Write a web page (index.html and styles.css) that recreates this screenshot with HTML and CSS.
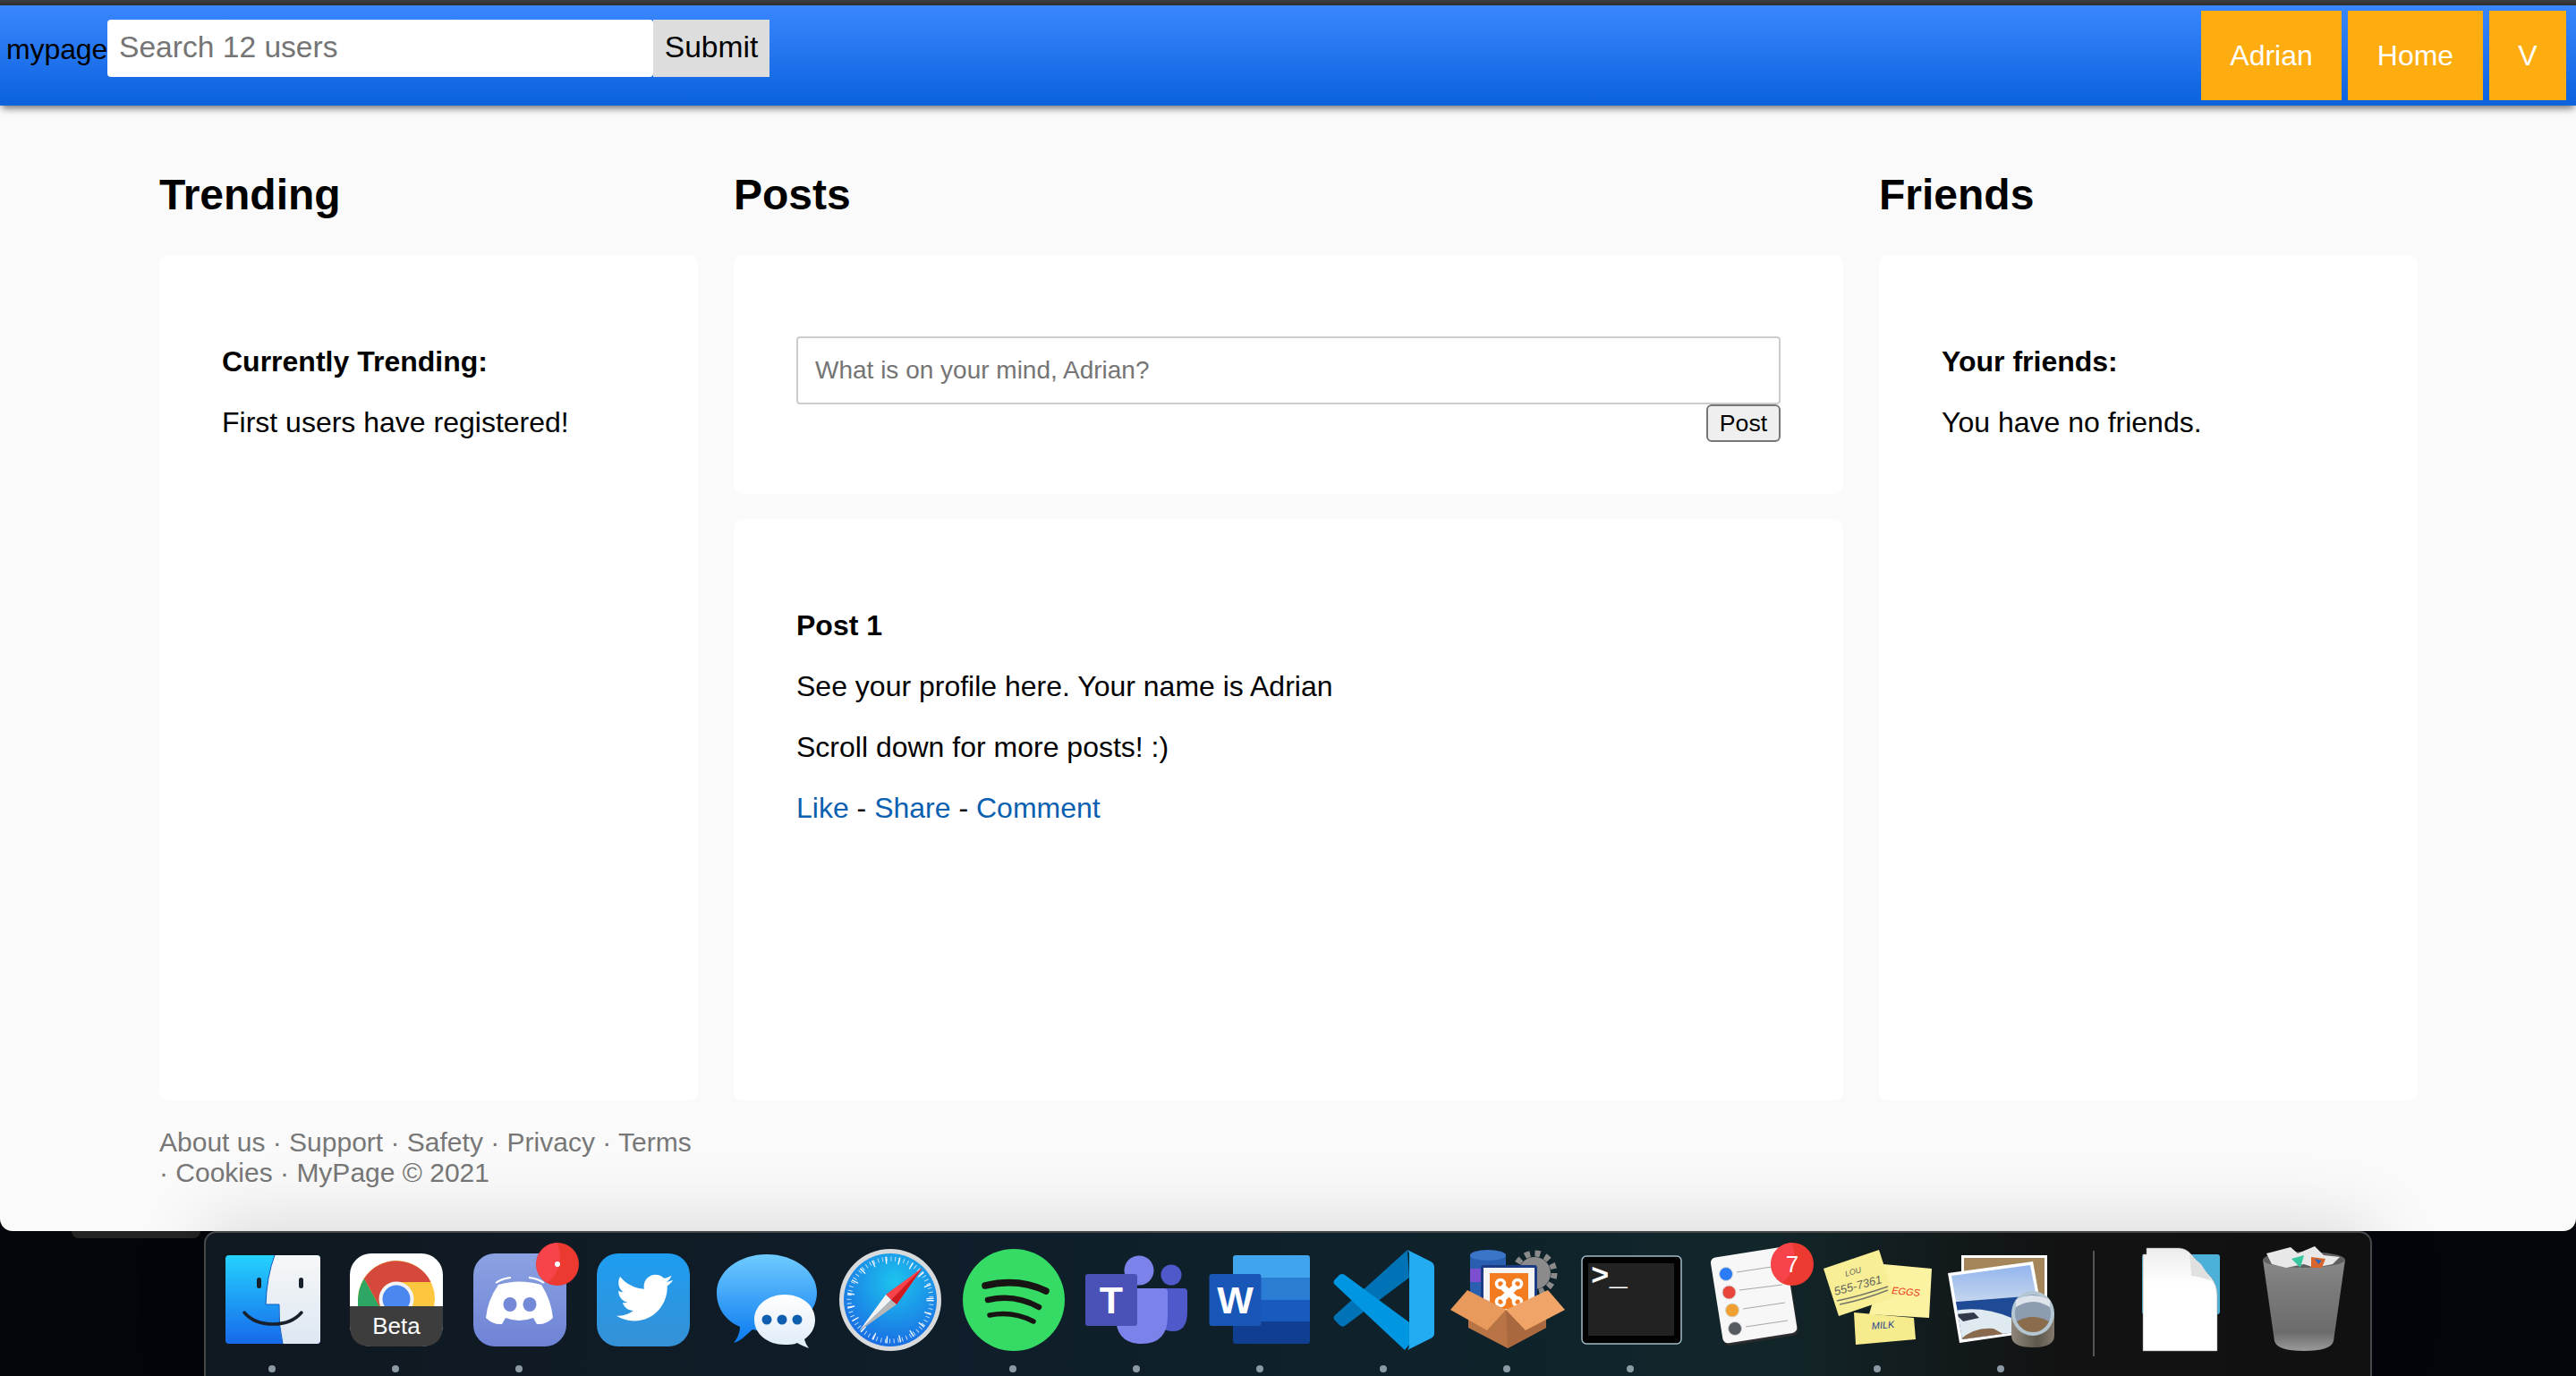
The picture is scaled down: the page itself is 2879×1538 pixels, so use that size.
FILE: index.html
```html
<!DOCTYPE html>
<html lang="en">
<head>
  <meta charset="UTF-8">
  <title>MyPage</title>
  <link rel="stylesheet" href="styles.css">
</head>
<body>
  <div class="window">
    <div class="titlebar"></div>
    <nav class="navbar">
      <form class="search">
        <span class="brand">mypage</span>
        <input class="search-input" type="text" placeholder="Search 12 users">
        <button class="search-button" type="button">Submit</button>
      </form>
      <div class="nav-links">
        <a class="nav-link" href="#">Adrian</a>
        <a class="nav-link" href="#">Home</a>
        <a class="nav-link" href="#">V</a>
      </div>
    </nav>

    <main class="columns">
      <section>
        <h2>Trending</h2>
        <div class="card card-full">
          <p><b>Currently Trending:</b></p>
          <p>First users have registered!</p>
        </div>
        <footer class="site-footer">
          <a href="#">About us</a> · <a href="#">Support</a> · <a href="#">Safety</a> · <a href="#">Privacy</a> · <a href="#">Terms</a> · <a href="#">Cookies</a> · MyPage © 2021
        </footer>
      </section>

      <section>
        <h2>Posts</h2>
        <form class="card post-form">
          <input class="post-input" type="text" placeholder="What is on your mind, Adrian?">
          <button class="post-button" type="button">Post</button>
        </form>
        <div class="card post">
          <p><b>Post 1</b></p>
          <p>See your profile here. Your name is Adrian</p>
          <p>Scroll down for more posts! :)</p>
          <p><a href="#">Like</a> - <a href="#">Share</a> - <a href="#">Comment</a></p>
        </div>
      </section>

      <section>
        <h2>Friends</h2>
        <div class="card card-full">
          <p><b>Your friends:</b></p>
          <p>You have no friends.</p>
        </div>
      </section>
    </main>
  </div>

  <div class="desktop">
    <div class="shelf"></div>
    <div class="dock">

      <!-- finder -->
      <div class="dock-item">
        <svg class="dock-icon" viewBox="0 0 120 120">
          <defs>
            <linearGradient id="finderBlue" x1="0" y1="0" x2="0" y2="1"><stop offset="0" stop-color="#24d2ff"/><stop offset="1" stop-color="#1769ea"/></linearGradient>
            <linearGradient id="finderLight" x1="0" y1="0" x2="0" y2="1"><stop offset="0" stop-color="#f6f7f8"/><stop offset="1" stop-color="#dde7f2"/></linearGradient>
          </defs>
          <rect x="8" y="10" width="106" height="99" rx="4" fill="url(#finderBlue)"/>
          <path d="M63 10H110Q114 10 114 14V105Q114 109 110 109H72Q67 88 68 65H53Q54 34 63 10Z" fill="url(#finderLight)"/>
          <path d="M63 10Q54 34 53 65H68Q67 88 72 109" fill="none" stroke="#0f5cc0" stroke-width="1"/>
          <rect x="43" y="35" width="5" height="12" rx="2.5" fill="#18202c"/>
          <rect x="90" y="35" width="5" height="12" rx="2.5" fill="#18202c"/>
          <path d="M29 74Q40 87 61 87T93 74" fill="none" stroke="#18202c" stroke-width="3.5" stroke-linecap="round"/>
        </svg>
        <span class="dot"></span>
      </div>

      <!-- chrome beta -->
      <div class="dock-item">
        <svg class="dock-icon" viewBox="0 0 120 120">
          <rect x="9" y="8" width="104" height="104" rx="24" fill="#fff"/>
          <circle cx="61" cy="59" r="43" fill="#fcc63f"/>
          <path d="M25 36L42 67H18Q17 48 25 36Z" fill="#2ea664"/>
          <path d="M25 36A43 43 0 0 1 99.5 40H61L42 67Z" fill="#d5493c"/>
          <circle cx="61" cy="59" r="19.5" fill="#f3f3f3"/>
          <circle cx="61" cy="59" r="15.5" fill="#4a88ef"/>
          <path d="M9 67H113V88Q113 112 89 112H33Q9 112 9 88Z" fill="#3d3d3d"/>
          <text class="icon-label" x="61" y="98" text-anchor="middle">Beta</text>
        </svg>
        <span class="dot"></span>
      </div>

      <!-- discord -->
      <div class="dock-item">
        <svg class="dock-icon" viewBox="0 0 120 120">
          <defs>
            <linearGradient id="discordBg" x1="0" y1="0" x2="0" y2="1"><stop offset="0" stop-color="#8ba2e2"/><stop offset="1" stop-color="#6e83d5"/></linearGradient>
          </defs>
          <rect x="9" y="8" width="104" height="104" rx="24" fill="url(#discordBg)"/>
          <path d="M37 43Q60 36 85 43Q96 60 98 80Q90 88 80 87L76 80Q60 86 45 80L41 87Q31 88 23 80Q25 60 37 43Z" fill="#fff"/>
          <path d="M34 41Q41 36 51 35M88 41Q81 36 71 35" fill="none" stroke="#fff" stroke-width="2"/>
          <ellipse cx="50" cy="65" rx="7.5" ry="8" fill="#7388d6"/>
          <ellipse cx="72" cy="65" rx="7.5" ry="8" fill="#7388d6"/>
          <circle cx="103" cy="20" r="24" fill="#ec3a30"/>
          <path d="M103 -4A24 24 0 0 0 92 41Q112 24 103 -4Z" fill="#f8434a"/>
          <circle cx="103" cy="20" r="3" fill="#fff"/>
        </svg>
        <span class="dot"></span>
      </div>

      <!-- twitter -->
      <div class="dock-item">
        <svg class="dock-icon" viewBox="0 0 120 120">
          <defs>
            <linearGradient id="twitterBg" x1="0" y1="0" x2="0" y2="1"><stop offset="0" stop-color="#1e9df1"/><stop offset="1" stop-color="#3591d6"/></linearGradient>
          </defs>
          <rect x="9" y="8" width="104" height="104" rx="24" fill="url(#twitterBg)"/>
          <path transform="translate(28 24) scale(2.8)" fill="#fff" d="M23.643 4.937c-.835.37-1.732.62-2.675.733.962-.576 1.7-1.49 2.048-2.578-.9.534-1.897.922-2.958 1.13-.85-.904-2.06-1.47-3.4-1.47-2.572 0-4.658 2.086-4.658 4.66 0 .364.042.718.12 1.06-3.873-.195-7.304-2.05-9.602-4.868-.4.69-.63 1.49-.63 2.342 0 1.616.823 3.043 2.072 3.878-.764-.025-1.482-.234-2.11-.583v.06c0 2.257 1.605 4.14 3.737 4.568-.392.106-.803.162-1.227.162-.3 0-.593-.028-.877-.082.593 1.85 2.313 3.198 4.352 3.234-1.595 1.25-3.604 1.995-5.786 1.995-.376 0-.747-.022-1.112-.065 2.062 1.323 4.51 2.093 7.14 2.093 8.57 0 13.255-7.098 13.255-13.254 0-.2-.005-.402-.014-.602.91-.658 1.7-1.477 2.323-2.41z"/>
        </svg>
      </div>

      <!-- messages -->
      <div class="dock-item">
        <svg class="dock-icon" viewBox="0 0 120 120">
          <defs>
            <linearGradient id="msgBlue" x1="0" y1="0" x2="0" y2="1"><stop offset="0" stop-color="#6fcbff"/><stop offset="1" stop-color="#0a7af0"/></linearGradient>
            <linearGradient id="msgWhite" x1="0" y1="0" x2="0" y2="1"><stop offset="0" stop-color="#fff"/><stop offset="1" stop-color="#dfebf7"/></linearGradient>
          </defs>
          <path d="M61 9C92 9 117 28 117 52C117 76 92 95 61 95C55 95 50 94 45 93C38 99 32 106 24 108C28 103 31 97 31 90C14 83 5 68 5 52C5 28 30 9 61 9Z" fill="url(#msgBlue)"/>
          <path d="M81 54C100 54 115 66 115 82C115 92 110 99 103 104C104 108 106 111 108 114C103 112 98 110 95 108C91 110 86 110 81 110C62 110 47 98 47 82C47 66 62 54 81 54Z" fill="url(#msgWhite)"/>
          <circle cx="61" cy="82" r="5.5" fill="#0f5fb0"/>
          <circle cx="78" cy="82" r="5.5" fill="#0f5fb0"/>
          <circle cx="95" cy="82" r="5.5" fill="#0f5fb0"/>
        </svg>
      </div>

      <!-- safari -->
      <div class="dock-item">
        <svg class="dock-icon" viewBox="0 0 120 120">
          <defs>
            <radialGradient id="safariBlue" cx="0.55" cy="0.3" r="0.8"><stop offset="0" stop-color="#1cc4ee"/><stop offset="1" stop-color="#1a62e2"/></radialGradient>
          </defs>
          <circle cx="61" cy="60" r="57" fill="#d9dadb"/>
          <circle cx="61" cy="60" r="52" fill="url(#safariBlue)"/>
          <circle cx="61" cy="60" r="46" fill="none" stroke="#cfe6fa" stroke-width="5" stroke-dasharray="0.9 3.92"/>
          <circle cx="61" cy="60" r="44.5" fill="none" stroke="#f2f8fe" stroke-width="8" stroke-dasharray="1.4 13.17"/>
          <path d="M97 24L56 54L68 65Z" fill="#f8434a"/>
          <path d="M97 24L62 60L68 65Z" fill="#cf1b1f"/>
          <path d="M26 95L56 54L62 60Z" fill="#f2f2f2"/>
          <path d="M26 95L62 60L68 65Z" fill="#b7b7b7"/>
        </svg>
      </div>

      <!-- spotify -->
      <div class="dock-item">
        <svg class="dock-icon" viewBox="0 0 120 120">
          <circle cx="61" cy="60" r="57" fill="#36db65"/>
          <g fill="none" stroke="#191414" stroke-linecap="round">
            <path d="M29 44Q66 35 97 50" stroke-width="7.5"/>
            <path d="M32 60Q62 53 89 68" stroke-width="6.5"/>
            <path d="M34 77Q60 72 83 84" stroke-width="5.5"/>
          </g>
        </svg>
        <span class="dot"></span>
      </div>

      <!-- teams -->
      <div class="dock-item">
        <svg class="dock-icon" viewBox="0 0 120 120">
          <circle cx="99" cy="32" r="11.5" fill="#5059c9"/>
          <path d="M80 47H113Q117 47 117 51V73Q117 95 101 95Q85 95 80 80Z" fill="#5059c9"/>
          <circle cx="63" cy="27" r="16.5" fill="#7b83eb"/>
          <path d="M37 47H91Q95 47 95 51V78Q95 109 66 109Q37 109 37 78Z" fill="#7b83eb"/>
          <rect x="3" y="31" width="58" height="58" rx="3" fill="#4a52b8"/>
          <text class="tile-letter" x="32" y="75" text-anchor="middle">T</text>
        </svg>
        <span class="dot"></span>
      </div>

      <!-- word -->
      <div class="dock-item">
        <svg class="dock-icon" viewBox="0 0 120 120">
          <path d="M30 35V13Q30 10 33 10H113Q116 10 116 13V35Z" fill="#41a5ee"/>
          <rect x="30" y="35" width="86" height="25" fill="#2b7cd3"/>
          <rect x="30" y="60" width="86" height="24" fill="#185abd"/>
          <path d="M30 84H116V106Q116 109 113 109H33Q30 109 30 106Z" fill="#103f91"/>
          <rect x="3.5" y="31" width="58" height="58" rx="3" fill="#1857b8"/>
          <text class="tile-letter" x="32.5" y="75" text-anchor="middle">W</text>
        </svg>
        <span class="dot"></span>
      </div>

      <!-- vs code -->
      <div class="dock-item">
        <svg class="dock-icon" viewBox="0 0 120 120">
          <path d="M87 4L89 35L17 89Q14 91 11 88L6 83Q3 80 6 77Z" fill="#0073b6"/>
          <path d="M6 43Q3 40 6 37L11 32Q14 30 17 32L89 85V110L84 116Z" fill="#0096e1"/>
          <path d="M87 4L113 17Q117 19 117 24V97Q117 101 113 103L87 116Q89 114 89 110V10Q89 6 87 4Z" fill="#24acf2"/>
        </svg>
        <span class="dot"></span>
      </div>

      <!-- xampp -->
      <div class="dock-item">
        <svg class="dock-icon" viewBox="0 0 120 120">
          <circle cx="91" cy="30" r="18" fill="#8b8b8b"/>
          <circle cx="91" cy="30" r="22" fill="none" stroke="#8b8b8b" stroke-width="7" stroke-dasharray="6 5.5"/>
          <path d="M19 10V60H59V10Z" fill="#2a5fb0"/>
          <rect x="19" y="25" width="40" height="15" fill="#7b4fd0"/>
          <ellipse cx="39" cy="10" rx="20" ry="6" fill="#3a75c8"/>
          <rect x="31" y="21" width="63" height="50" rx="3" fill="#1b3b85"/>
          <rect x="34" y="24" width="57" height="47" fill="#f4f4f4"/>
          <rect x="41" y="30" width="43" height="40" fill="#f47c20"/>
          <g fill="none" stroke="#fff">
            <path d="M54 44L71 60M71 44L54 60" stroke-width="7"/>
            <circle cx="53" cy="42" r="4.5" stroke-width="3.5"/>
            <circle cx="72" cy="42" r="4.5" stroke-width="3.5"/>
            <circle cx="53" cy="62" r="4.5" stroke-width="3.5"/>
            <circle cx="72" cy="62" r="4.5" stroke-width="3.5"/>
          </g>
          <path d="M17 72L59 71L104 72V91L61 114L17 91Z" fill="#b87445"/>
          <path d="M59 71L61 114L104 91V72Z" fill="#a9683d"/>
          <path d="M-3 71L16 49L59 71L38 94Z" fill="#e89a5c"/>
          <path d="M125 71L106 49L59 71L81 94Z" fill="#f0a468"/>
        </svg>
        <span class="dot"></span>
      </div>

      <!-- terminal -->
      <div class="dock-item">
        <svg class="dock-icon" viewBox="0 0 120 120">
          <rect x="6" y="11" width="111" height="98" rx="5" fill="#020202" stroke="#a3bcc8" stroke-width="1.5"/>
          <rect x="13" y="19" width="96" height="81" fill="#222"/>
          <text class="term-prompt" x="16" y="43">&gt;_</text>
        </svg>
        <span class="dot"></span>
      </div>

      <!-- reminders -->
      <div class="dock-item">
        <svg class="dock-icon" viewBox="0 0 120 120">
          <rect x="20" y="8" width="84" height="98" rx="6" fill="#2c2c2e" transform="rotate(-9 62 60)"/>
          <rect x="19" y="6" width="84" height="97" rx="6" fill="#f7f7f7" transform="rotate(-9 62 60)"/>
          <g stroke="#d4d4d4" stroke-width="1">
            <circle cx="29" cy="31" r="7.5" fill="#2b7cf6"/>
            <circle cx="32.5" cy="51.5" r="7.5" fill="#e8463c"/>
            <circle cx="36" cy="71.5" r="7.5" fill="#f0a030"/>
            <circle cx="39" cy="92" r="7.5" fill="#555a60"/>
          </g>
          <g stroke="#a8a8a8" stroke-width="1">
            <path d="M41 29L80 23"/>
            <path d="M44 49L92 43"/>
            <path d="M48 70L95 63"/>
            <path d="M51 90L98 83"/>
          </g>
          <circle cx="103" cy="20" r="24" fill="#ec3a30"/>
          <path d="M103 -4A24 24 0 0 0 92 41Q112 24 103 -4Z" fill="#f8434a"/>
          <text class="badge-num" x="103" y="29" text-anchor="middle">7</text>
        </svg>
      </div>

      <!-- stickies -->
      <div class="dock-item">
        <svg class="dock-icon" viewBox="0 0 120 120">
          <path d="M34 74L101 80L103 104L36 110Z" fill="#f6ec8e"/>
          <path d="M67 20L121 25L118 80L51 76Z" fill="#fbf2a2"/>
          <path d="M0 25L62 4L79 57L17 78Z" fill="#f7ee95"/>
          <text class="note note-gray note-small" x="25" y="34" transform="rotate(-16 25 34)">LOU</text>
          <text class="note note-gray" x="13" y="55" transform="rotate(-15 13 55)">555-7361</text>
          <path d="M15 61Q40 56 72 45M18 65Q44 60 72 49" fill="none" stroke="#77776a" stroke-width="1.5"/>
          <text class="note note-red" x="76" y="53" transform="rotate(5 76 53)">EGGS</text>
          <text class="note note-blue" x="54" y="93" transform="rotate(-5 54 93)">MILK</text>
        </svg>
        <span class="dot"></span>
      </div>

      <!-- preview -->
      <div class="dock-item">
        <svg class="dock-icon" viewBox="0 0 120 120">
          <defs>
            <linearGradient id="previewSky" x1="0" y1="0" x2="0" y2="1"><stop offset="0" stop-color="#8cb0ee"/><stop offset="1" stop-color="#c8d8ee"/></linearGradient>
            <linearGradient id="lensBody" x1="0" y1="0" x2="1" y2="0"><stop offset="0" stop-color="#8f877a"/><stop offset="0.6" stop-color="#5e574d"/><stop offset="1" stop-color="#82796b"/></linearGradient>
            <clipPath id="previewPhoto"><path d="M5 33L93 21L107 92L17 104Z"/></clipPath>
          </defs>
          <rect x="16" y="10" width="96" height="50" fill="#fff"/>
          <rect x="19" y="13" width="90" height="46" fill="#a5855a"/>
          <path d="M1 30L96 17L110 94L14 108Z" fill="#fff"/>
          <g clip-path="url(#previewPhoto)">
            <rect x="0" y="15" width="112" height="50" fill="url(#previewSky)"/>
            <path d="M0 63L112 54V110H0Z" fill="#1e4a96"/>
            <path d="M8 72Q40 66 72 80L84 104L12 110Z" fill="#dfeaf0"/>
            <path d="M10 76L30 74L36 80L18 84Z" fill="#31394a"/>
            <path d="M14 105Q30 90 52 92L70 102L30 110Z" fill="#8a6a4c"/>
          </g>
          <path d="M72 75V100Q72 113 96 113Q120 113 120 100V75Z" fill="url(#lensBody)"/>
          <ellipse cx="96" cy="75" rx="24" ry="25" fill="#b4c6d2"/>
          <ellipse cx="96" cy="75" rx="20" ry="21" fill="#8e9cb2"/>
          <path d="M77 68Q96 56 115 68V60Q96 50 77 60Z" fill="#dfe4ec"/>
          <path d="M78 84Q96 74 114 84Q108 96 96 96Q84 96 78 84Z" fill="#8b6c4c"/>
        </svg>
        <span class="dot"></span>
      </div>

      <div class="dock-divider"></div>

      <!-- documents stack -->
      <div class="dock-item">
        <svg class="dock-icon" viewBox="0 0 120 120">
          <defs>
            <linearGradient id="docSheet" x1="0" y1="0" x2="0" y2="1"><stop offset="0" stop-color="#ececec"/><stop offset="0.35" stop-color="#fff"/></linearGradient>
          </defs>
          <rect x="17" y="9" width="87" height="67" rx="3" fill="#4db0d8"/>
          <path d="M22 2H58Q66 2 72 9L95 36Q101 44 101 54V117H18V9H22Z" fill="url(#docSheet)" stroke="#8d8d8d" stroke-width="0.5"/>
          <path d="M70 9Q72 28 72 33Q84 34 95 39L83 20Z" fill="#e0e0e0"/>
        </svg>
      </div>

      <!-- trash -->
      <div class="dock-item">
        <svg class="dock-icon" viewBox="0 0 120 120">
          <defs>
            <linearGradient id="binBody" x1="0" y1="0" x2="0" y2="1"><stop offset="0" stop-color="#8a8a8a"/><stop offset="0.3" stop-color="#7b7b7b"/><stop offset="0.8" stop-color="#6c6c6c"/><stop offset="1" stop-color="#9a9a9a"/></linearGradient>
          </defs>
          <path d="M14 15L27 106Q30 117 60 117Q90 117 93 106L106 15Z" fill="url(#binBody)"/>
          <ellipse cx="60" cy="15" rx="46" ry="9" fill="#5f5f5f"/>
          <path d="M18 8L45 1L53 8L72 0L82 10L100 12L92 20L72 24L60 20L40 24L24 20Z" fill="#e8e8e8"/>
          <path d="M46 14L60 10L56 24Z" fill="#39c7a0"/>
          <path d="M68 12L84 14L80 24L68 24Z" fill="#d8662c"/>
          <path d="M72 14L80 16L76 20Z" fill="#3069c0"/>
        </svg>
      </div>
    </div>
  </div>
</body>
</html>
```

FILE: styles.css
```css
* {
  box-sizing: border-box;
}

html, body {
  height: 100%;
}

body {
  margin: 0;
  overflow: hidden;
  background-color: #02060a;
  color: #000;
  font-family: "Liberation Sans", Arial, sans-serif;
  font-size: 32px;
}

.window {
  height: 1376px;
  background-color: #fafafa;
  border-radius: 0 0 14px 14px;
  overflow: hidden;
}

.titlebar {
  height: 6px;
  background: linear-gradient(#3e3f42, #2e2f31);
}

.navbar {
  display: flex;
  justify-content: space-between;
  height: 112px;
  padding: 6px 11px 6px 7px;
  background: linear-gradient(#3a87ff, #0b62dc);
  box-shadow: 0 5px 8px -2px rgba(0, 0, 0, 0.55);
}

.search {
  display: flex;
  align-items: flex-start;
  padding-top: 10px;
}

.brand {
  width: 113px;
  margin-top: 15px;
  letter-spacing: -0.1px;
}

.search-input {
  width: 610px;
  height: 64px;
  padding: 0 13px 3px;
  border: none;
  border-radius: 4px;
  background-color: #fff;
  font-family: inherit;
  font-size: 33.6px;
}

.search-input::placeholder,
.post-input::placeholder {
  color: #757575;
}

.search-button {
  width: 130px;
  height: 64px;
  padding: 0 0 3px;
  border: none;
  background-color: #ddd;
  color: #000;
  font-family: inherit;
  font-size: 33.6px;
}

.nav-links {
  display: flex;
  gap: 7px;
}

.nav-link {
  display: flex;
  align-items: center;
  padding: 0 32.5px;
  background-color: #fdad10;
  color: #fff;
  text-decoration: none;
}

.columns {
  display: grid;
  grid-template-columns: 602px 1240px 602px;
  gap: 40px;
  padding: 32px 0 0 178px;
}

h2 {
  margin: 40px 0;
  font-size: 48px;
}

.card {
  background-color: #fff;
  border-radius: 10px;
}

.card p {
  margin: 32px 0;
  line-height: 36px;
}

.card-full {
  height: 945px;
  padding: 69px 70px;
}

.post-form {
  display: flex;
  flex-direction: column;
  align-items: flex-end;
  height: 267px;
  padding: 91px 70px 58px;
}

.post-input {
  width: 100%;
  height: 76px;
  padding: 0 19px;
  border: 2px solid #ccc;
  border-radius: 4px;
  font-family: inherit;
  font-size: 28px;
}

.post-button {
  width: 83px;
  height: 42px;
  padding: 0;
  border: 2px solid #767676;
  border-radius: 6px;
  background-color: #efefef;
  color: #000;
  font-family: inherit;
  font-size: 26.67px;
}

.post {
  height: 650px;
  margin-top: 28px;
  padding: 69px 70px;
}

.post a {
  color: #0a60b0;
  text-decoration: none;
}

.site-footer {
  margin-top: 30px;
  color: #777;
  font-size: 30px;
}

.site-footer a {
  color: inherit;
  text-decoration: none;
}

.desktop {
  display: flex;
  align-items: flex-start;
  height: 162px;
}

.shelf {
  width: 144px;
  height: 8px;
  margin-left: 80px;
  background-color: #242424;
  border-radius: 0 0 8px 8px;
}

.dock {
  display: flex;
  align-items: flex-start;
  width: 2423px;
  height: 162px;
  margin-left: 4px;
  padding-left: 5px;
  border: 2px solid #47484a;
  border-bottom: none;
  border-radius: 14px 14px 0 0;
  background: linear-gradient(90deg, #101820 0%, #0f1e2a 35%, #0f232b 62%, #12262a 72%, #121212 86%, #111 100%);
  box-shadow: 0 -10px 80px rgba(0, 0, 0, 0.13);
}

.dock-item {
  display: flex;
  flex-direction: column;
  align-items: center;
  width: 138px;
  padding-top: 15px;
}

.dock-icon {
  display: block;
  width: 120px;
  height: 120px;
  overflow: visible;
}

.dot {
  width: 8px;
  height: 8px;
  margin-top: 13px;
  border-radius: 50%;
  background-color: #8b9aa4;
}

.dock-divider {
  width: 2px;
  height: 118px;
  margin: 20px 27px 0 34px;
  background-color: #555;
}

.icon-label {
  fill: #fff;
  font-size: 26px;
}

.tile-letter {
  fill: #fff;
  font-size: 43px;
  font-weight: bold;
}

.term-prompt {
  fill: #fff;
  font-family: "Liberation Mono", monospace;
  font-size: 34px;
  font-weight: bold;
}

.badge-num {
  fill: #fff;
  font-size: 26px;
}

.note {
  font-size: 13px;
  font-style: italic;
}

.note-small {
  font-size: 9px;
}

.note-gray {
  fill: #66665c;
}

.note-red {
  fill: #f03a20;
  font-size: 11px;
}

.note-blue {
  fill: #2a3f90;
  font-size: 11px;
}
```
